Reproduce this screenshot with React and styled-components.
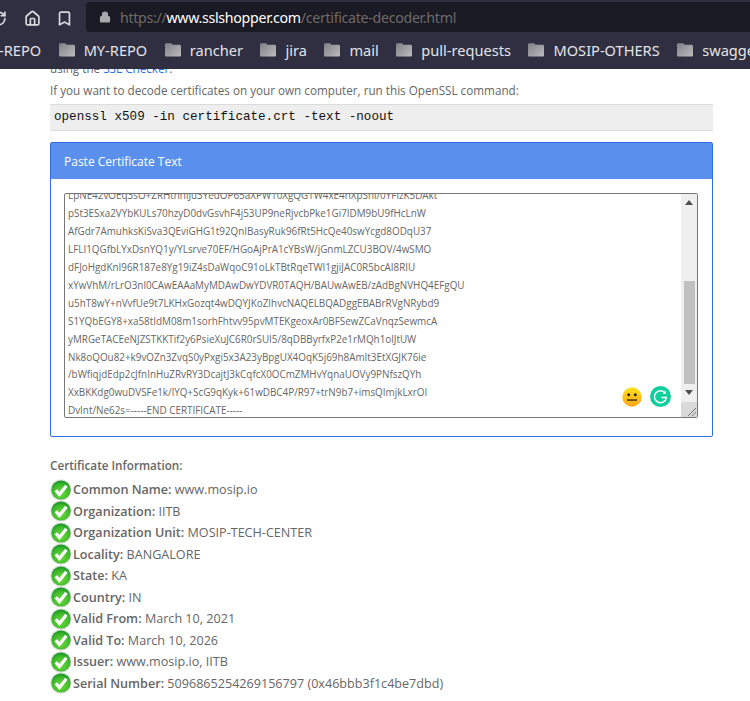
import React from "react";
import styled, { createGlobalStyle } from "styled-components";
import { RotateCw, Home, Bookmark, Lock } from "lucide-react";

const Global = createGlobalStyle`
  html, body { margin: 0; padding: 0; background: #fff; }
  body { font-family: "Open Sans", "Liberation Sans", sans-serif; color: #666; }
`;

const Screen = styled.div`
  width: 750px;
  height: 701px;
  overflow: hidden;
  display: flex;
  flex-direction: column;
`;

const Toolbar = styled.div`
  height: 32px;
  flex: none;
  background: #2f2f41;
  display: flex;
  align-items: center;
  color: #d8d8dc;
  padding: 2px 0 0 0;
  box-sizing: border-box;
`;

const NavIcons = styled.div`
  width: 86px;
  flex: none;
  display: flex;
  align-items: center;
  gap: 15px;
  margin-left: -10px;
  padding-top: 3px;
  svg:first-child { margin-right: 2px; }
`;

const UrlBox = styled.div`
  flex: 1;
  height: 30px;
  background: #1a1a24;
  border-radius: 4px 0 0 4px;
  display: flex;
  align-items: center;
  padding-left: 13px;
  margin-left: 10px;
  font-family: "Noto Sans", sans-serif;
  font-size: 14.2px;
  letter-spacing: -0.3px;
  color: #6f6a66;
  gap: 9px;
  svg { color: #a8a8ae; }
`;

const Host = styled.span`
  color: #ffffff;
`;

const BookmarkBar = styled.div`
  height: 37px;
  flex: none;
  background: #2f2f41;
  display: flex;
  align-items: center;
  gap: 16.5px;
  margin-left: -1px;
  padding-bottom: 2px;
  box-sizing: border-box;
  white-space: nowrap;
  font-family: "Noto Sans", sans-serif;
  font-size: 14.6px;
  color: #e4e4e8;
`;

const BookmarkItem = styled.div`
  display: flex;
  align-items: center;
  gap: 8px;
`;

const Page = styled.main`
  flex: 1;
  overflow: hidden;
  padding: 0 37px 0 50px;
  font-size: 11.7px;
  line-height: 21.6px;
`;

const Intro = styled.p`
  margin: -11px 0 0;
`;

const Paragraph = styled.p`
  margin: 0;
`;

const Link = styled.a`
  color: #2a6fe0;
  text-decoration: none;
`;

const CodeBlock = styled.pre`
  margin: 3px 0 0;
  height: 27px;
  box-sizing: border-box;
  background: #eeeeee;
  border-top: 1px solid #dcdcdc;
  border-bottom: 1px solid #dcdcdc;
  padding: 0 4px;
  font-family: "Liberation Mono", monospace;
  font-size: 12.6px;
  line-height: 24px;
  color: #111;
`;

const Panel = styled.section`
  margin-top: 11px;
  height: 295px;
  box-sizing: border-box;
  border: 1px solid #2e6fe6;
  border-radius: 2px;
`;

const PanelHeader = styled.div`
  height: 36px;
  background: #5a90ec;
  color: #fff;
  font-size: 12px;
  line-height: 37px;
  padding-left: 13px;
`;

const PanelBody = styled.div`
  padding: 14px 14px 0 13px;
`;

const TextBox = styled.div`
  position: relative;
  height: 225px;
  box-sizing: border-box;
  border: 1px solid #777;
  border-radius: 2px;
  display: flex;
  overflow: hidden;
`;

const CertLines = styled.div`
  flex: 1;
  min-width: 0;
  display: flex;
  flex-direction: column;
  justify-content: flex-end;
  padding: 0 0 0 3px;
  margin-bottom: -3px;
  font-size: 9.9px;
  line-height: 17.9px;
  color: #666;
  white-space: nowrap;
`;

const Scrollbar = styled.div`
  width: 16px;
  flex: none;
  background: #efefef;
  display: flex;
  flex-direction: column;
  align-items: center;
`;

const Arrow = styled.div`
  width: 0;
  height: 0;
  flex: none;
  border-left: 4px solid transparent;
  border-right: 4px solid transparent;
  ${(p) => (p.$up ? "border-bottom: 5px solid #505050;" : "border-top: 5px solid #505050;")}
  margin: ${(p) => (p.$up ? "6px 0 76px" : "6px 0 7px")};
`;

const Thumb = styled.div`
  width: 11px;
  height: 103px;
  flex: none;
  background: #c0c0c0;
`;

const Resizer = styled.div`
  width: 16px;
  height: 15px;
  flex: none;
  background: #d9d9d9;
  svg { display: block; }
`;

const FloatIcons = styled.div`
  position: absolute;
  right: 26px;
  bottom: 10px;
  display: flex;
  align-items: center;
  gap: 8px;
  svg { display: block; }
`;

const InfoTitle = styled.div`
  margin-top: 17px;
  font-size: 11.7px;
  font-weight: 600;
  line-height: 22px;
`;

const InfoList = styled.ul`
  list-style: none;
  margin: 3px 0 0;
  padding: 0;
`;

const InfoRow = styled.li`
  height: 21.5px;
  display: flex;
  align-items: center;
  gap: 1px;
  white-space: pre;
  font-size: 12.6px;
  svg { flex: none; display: block; }
`;

const Label = styled.b`
  font-weight: 600;
`;

const Folder = () => (
  <svg width="18" height="16" viewBox="0 0 18 16">
    <defs>
      <linearGradient id="fold" x1="0" y1="0" x2="1" y2="1">
        <stop offset="0" stopColor="#7f7f85" />
        <stop offset="1" stopColor="#bdbdc0" />
      </linearGradient>
    </defs>
    <path d="M1 2.5C1 1.7 1.5 1.2 2.3 1.2H7l1.6 1.6h7c.8 0 1.4.6 1.4 1.4v9c0 .8-.6 1.4-1.4 1.4H2.4C1.6 14.6 1 14 1 13.2z" fill="url(#fold)" />
  </svg>
);

const Check = () => (
  <svg width="22" height="22" viewBox="0 0 22 22">
    <defs>
      <radialGradient id="tick" cx="0.5" cy="0.65" r="0.6">
        <stop offset="0" stopColor="#6fdc3a" />
        <stop offset="0.75" stopColor="#3cb82c" />
        <stop offset="1" stopColor="#1f9a28" />
      </radialGradient>
    </defs>
    <circle cx="11" cy="11" r="10.6" fill="#d4d8d2" />
    <circle cx="11" cy="11" r="9.6" fill="url(#tick)" />
    <path d="M5.8 11.2l3.6 4.2 7-8.6" fill="none" stroke="#fff" strokeWidth="3.2" />
  </svg>
);

const Neutral = () => (
  <svg width="20" height="20" viewBox="0 0 20 20">
    <defs>
      <linearGradient id="face" x1="0" y1="0" x2="0" y2="1">
        <stop offset="0" stopColor="#ffe11c" />
        <stop offset="1" stopColor="#ffa514" />
      </linearGradient>
    </defs>
    <circle cx="10" cy="10" r="9.7" fill="url(#face)" />
    <circle cx="6.7" cy="7.8" r="1.5" fill="#2c2416" />
    <circle cx="13.3" cy="7.8" r="1.5" fill="#2c2416" />
    <rect x="5" y="12.4" width="10" height="1.3" fill="#2c2416" />
  </svg>
);

const Grammarly = () => (
  <svg width="21" height="21" viewBox="0 0 21 21">
    <circle cx="10.5" cy="10.5" r="10.5" fill="#10cf9c" />
    <path d="M15.2 7a6 6 0 1 0 1.2 4.6h-5" fill="none" stroke="#fff" strokeWidth="1.5" />
    <path d="M15.8 4.6v3.2h-3.2z" fill="#fff" />
  </svg>
);

const bookmarks = ["MY-REPO", "rancher", "jira", "mail", "pull-requests", "MOSIP-OTHERS", "swagger"];

const certLines = [
  "LpNE42vOEq3sO+ZRHthnlJu3YedOP65aXPW10XgQGTW4xE4nXpSnl/0YFlzK5DAkt",
  "pSt3ESxa2VYbKULs70hzyD0dvGsvhF4j53UP9neRjvcbPke1Gi7IDM9bU9fHcLnW",
  "AfGdr7AmuhksKiSva3QEviGHG1t92QnIBasyRuk96fRt5HcQe40swYcgd8ODqU37",
  "LFLI1QGfbLYxDsnYQ1y/YLsrve70EF/HGoAjPrA1cYBsW/jGnmLZCU3BOV/4wSMO",
  "dFJoHgdKnI96R187e8Yg19iZ4sDaWqoC91oLkTBtRqeTWI1gjiJAC0R5bcAI8RIU",
  "xYwVhM/rLrO3nl0CAwEAAaMyMDAwDwYDVR0TAQH/BAUwAwEB/zAdBgNVHQ4EFgQU",
  "u5hT8wY+nVvfUe9t7LKHxGozqt4wDQYJKoZIhvcNAQELBQADggEBABrRVgNRybd9",
  "S1YQbEGY8+xa58tIdM08m1sorhFhtvv95pvMTEKgeoxAr0BFSewZCaVnqzSewmcA",
  "yMRGeTACEeNJZSTKKTif2y6PsieXuJC6R0rSUI5/8qDBByrfxP2e1rMQh1olJtUW",
  "Nk8oQOu82+k9vOZn3ZvqS0yPxgi5x3A23yBpgUX4OqK5j69h8AmIt3EtXGJK76ie",
  "/bWfiqjdEdp2cJfnInHuZRvRY3DcajtJ3kCqfcX0OCmZMHvYqnaUOVy9PNfszQYh",
  "XxBKKdg0wuDVSFe1k/lYQ+ScG9qKyk+61wDBC4P/R97+trN9b7+imsQImjkLxrOI",
  "DvInt/Ne62s=-----END CERTIFICATE-----",
];

const info = [
  ["Common Name:", "www.mosip.io"],
  ["Organization:", "IITB"],
  ["Organization Unit:", "MOSIP-TECH-CENTER"],
  ["Locality:", "BANGALORE"],
  ["State:", "KA"],
  ["Country:", "IN"],
  ["Valid From:", "March 10, 2021"],
  ["Valid To:", "March 10, 2026"],
  ["Issuer:", "www.mosip.io, IITB"],
  ["Serial Number:", "509686525426915 6797 (0x46bbb3f1c4be7dbd)".replace("915 6", "9156")],
];

export default function App() {
  return (
    <Screen>
      <Global />
      <Toolbar>
        <NavIcons>
          <RotateCw size={17} strokeWidth={2.4} />
          <Home size={17} strokeWidth={2.4} />
          <Bookmark size={17} strokeWidth={2.4} />
        </NavIcons>
        <UrlBox>
          <Lock size={12} fill="#a8a8ae" strokeWidth={2.4} />
          <span>
            https://<Host>www.sslshopper.com</Host>/certificate-decoder.html
          </span>
        </UrlBox>
      </Toolbar>
      <BookmarkBar>
        <BookmarkItem>-REPO</BookmarkItem>
        {bookmarks.map((b) => (
          <BookmarkItem key={b}>
            <Folder />
            {b}
          </BookmarkItem>
        ))}
      </BookmarkBar>
      <Page>
        <Intro>
          using the <Link href="#">SSL Checker</Link>.
        </Intro>
        <Paragraph>If you want to decode certificates on your own computer, run this OpenSSL command:</Paragraph>
        <CodeBlock>openssl x509 -in certificate.crt -text -noout</CodeBlock>
        <Panel>
          <PanelHeader>Paste Certificate Text</PanelHeader>
          <PanelBody>
            <TextBox>
              <CertLines>
                {certLines.map((l) => (
                  <div key={l}>{l}</div>
                ))}
              </CertLines>
              <Scrollbar>
                <Arrow $up />
                <Thumb />
                <Arrow />
                <Resizer>
                  <svg width="16" height="15" viewBox="0 0 16 15">
                    <path d="M7 14L15 6M11 14L15 10" stroke="#777" strokeWidth="1" />
                  </svg>
                </Resizer>
              </Scrollbar>
              <FloatIcons>
                <Neutral />
                <Grammarly />
              </FloatIcons>
            </TextBox>
          </PanelBody>
        </Panel>
        <InfoTitle>Certificate Information:</InfoTitle>
        <InfoList>
          {info.map(([k, v]) => (
            <InfoRow key={k}>
              <Check />
              <span>
                <Label>{k}</Label> {v}
              </span>
            </InfoRow>
          ))}
        </InfoList>
      </Page>
    </Screen>
  );
}
